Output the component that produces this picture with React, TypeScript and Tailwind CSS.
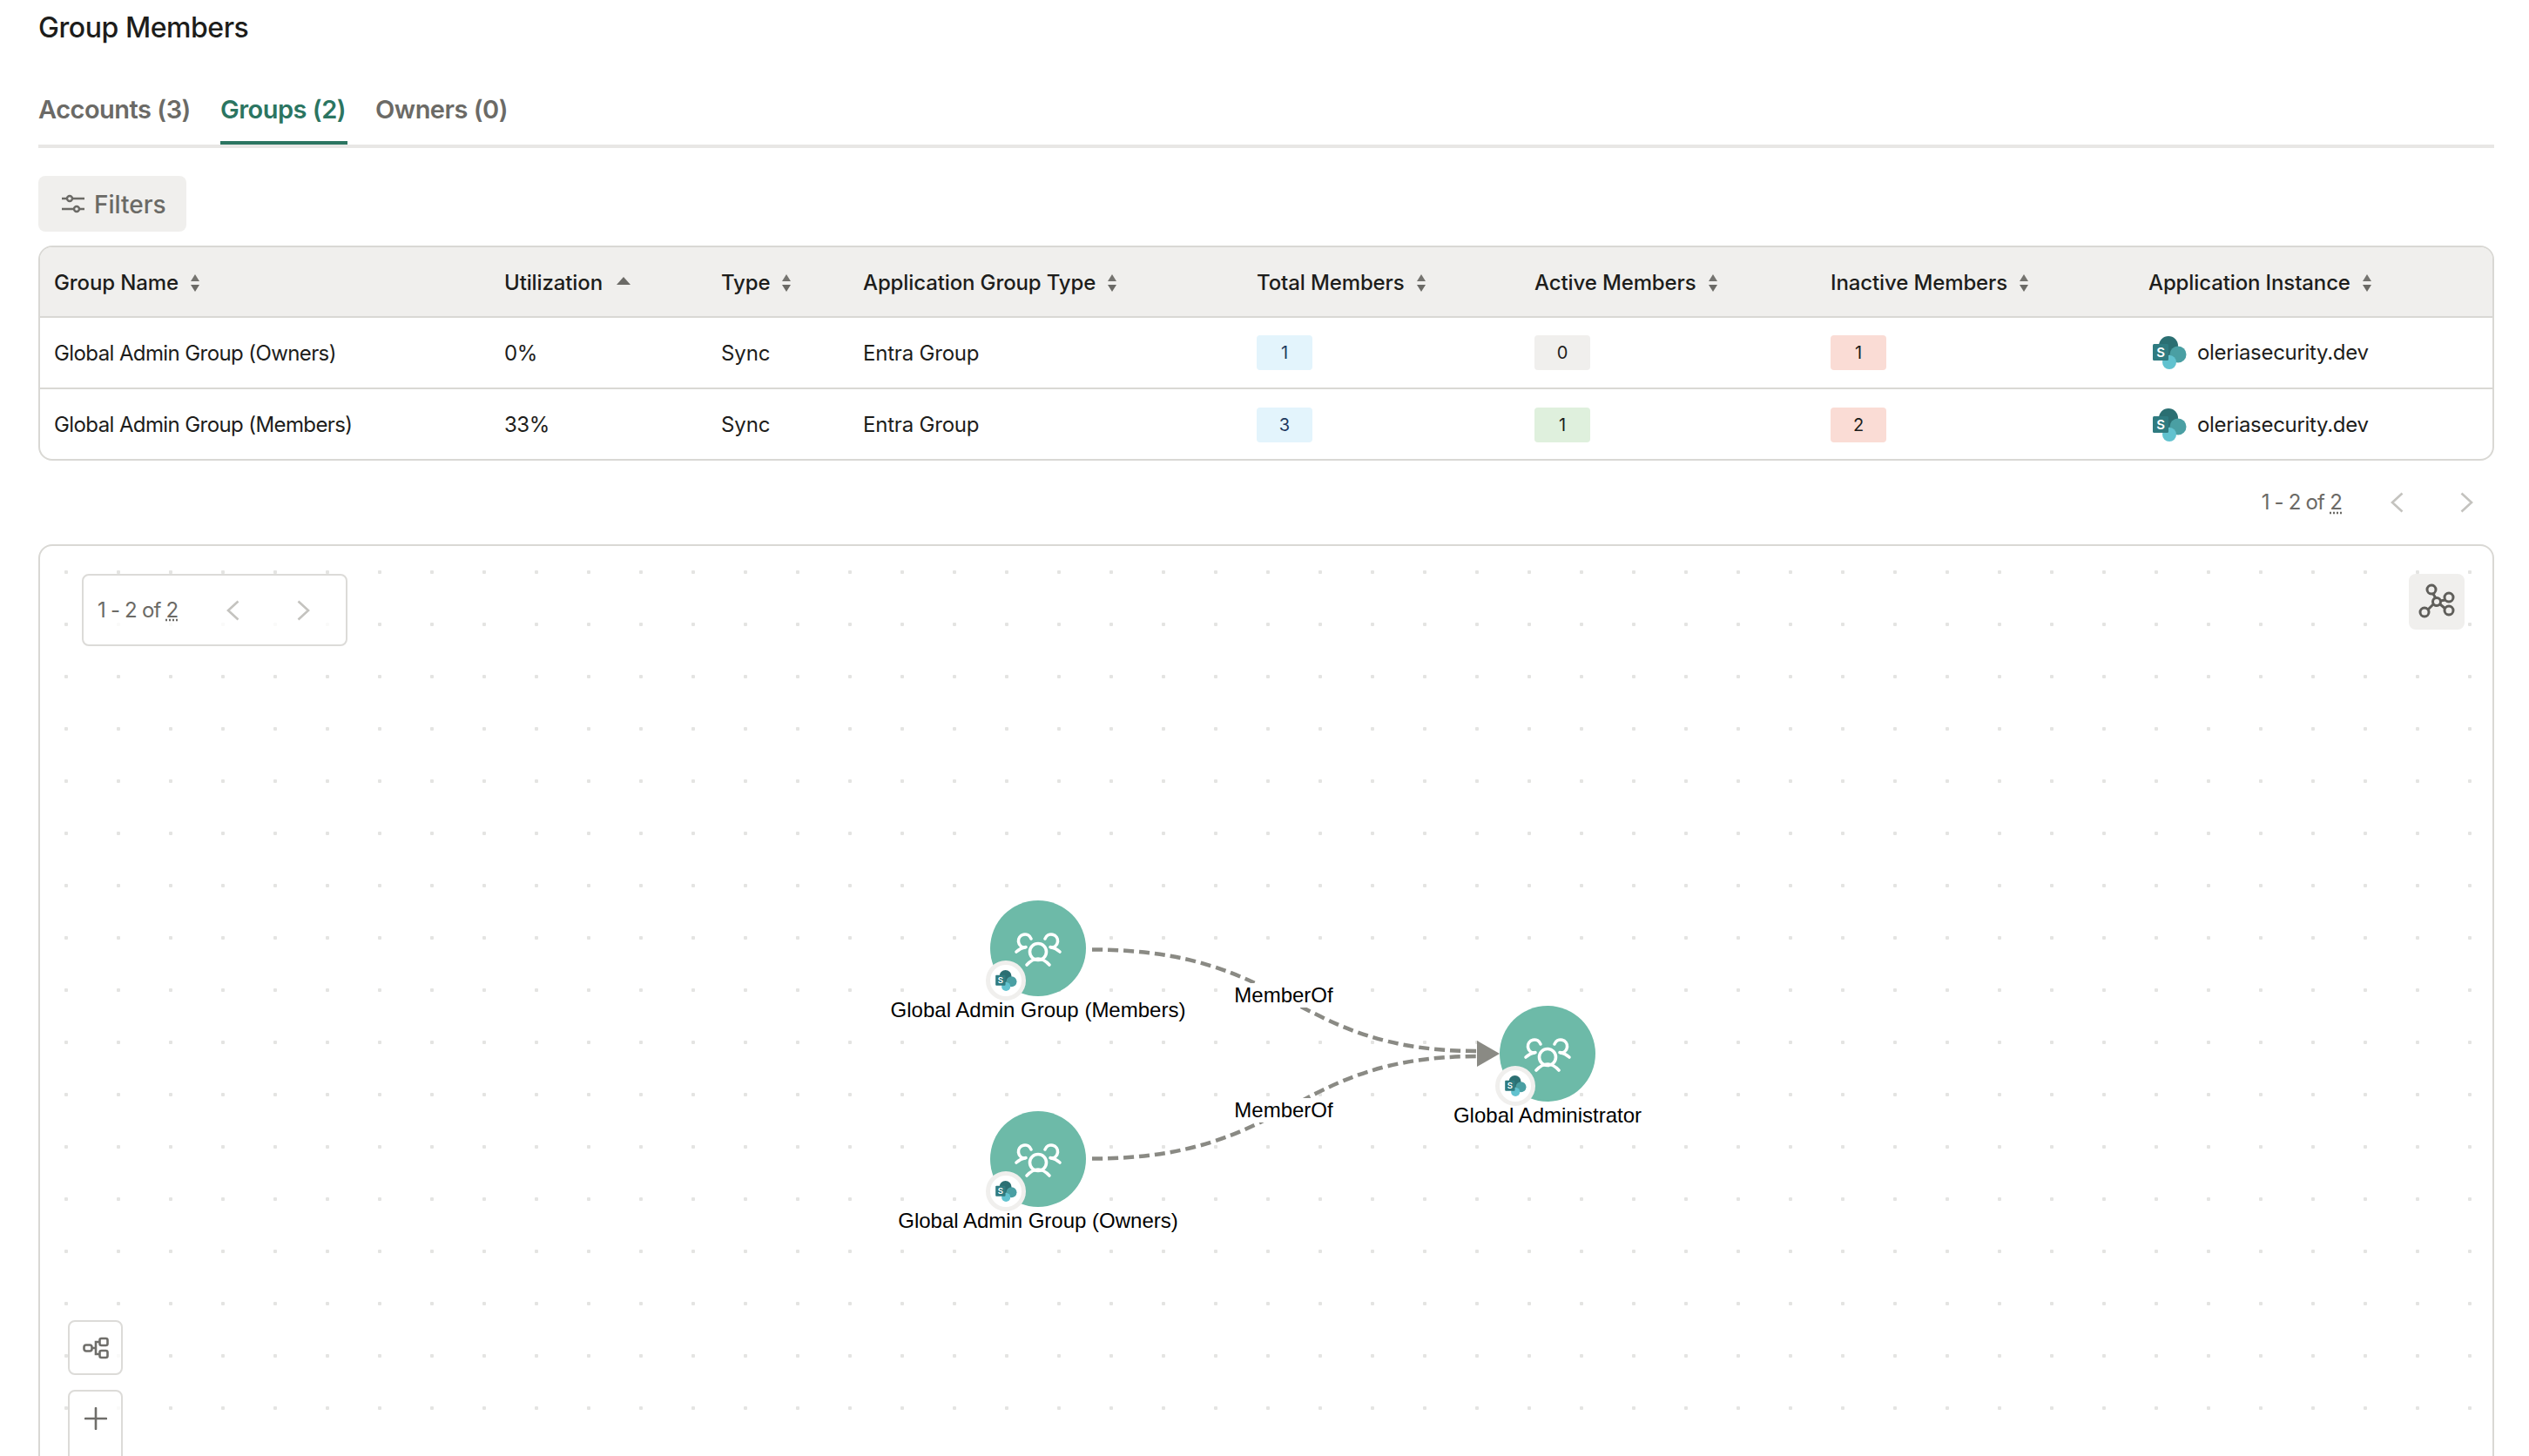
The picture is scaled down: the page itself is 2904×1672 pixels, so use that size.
import React from 'react';

const SANS = 'font-[Inter,sans-serif]';

const columns = [
  { label: 'Group Name', width: 'w-[517px]' },
  { label: 'Utilization', width: 'w-[249px]', sorted: true },
  { label: 'Type', width: 'w-[163px]' },
  { label: 'Application Group Type', width: 'w-[452px]' },
  { label: 'Total Members', width: 'w-[319px]' },
  { label: 'Active Members', width: 'w-[340px]' },
  { label: 'Inactive Members', width: 'w-[365px]' },
  { label: 'Application Instance', width: 'w-[411px]' },
];

const rows = [
  { name: 'Global Admin Group (Owners)', util: '0%', total: '1', active: '0', activeBg: 'bg-[#f0efed]', inactive: '1' },
  { name: 'Global Admin Group (Members)', util: '33%', total: '3', active: '1', activeBg: 'bg-[#dff0dd]', inactive: '2' },
];

function SortIcon({ sorted }: { sorted?: boolean }) {
  if (sorted) {
    return (
      <svg width="18" height="12" viewBox="0 0 18 12" className="ml-[15px] mt-[-4px]">
        <path d="M9 1 L17 10 L1 10 Z" fill="#6b6a66" />
      </svg>
    );
  }
  return (
    <svg width="12" height="22" viewBox="0 0 12 22" className="ml-[13px]">
      <path d="M6 1 L11 9 L1 9 Z" fill="#757470" />
      <path d="M6 21 L11 13 L1 13 Z" fill="#6b6a66" />
    </svg>
  );
}

function SharePoint({ className }: { className: string }) {
  return (
    <svg viewBox="0 0 39 38" className={className}>
      <circle cx="18" cy="11" r="11" fill="#2b6f72" />
      <circle cx="29" cy="21" r="9.5" fill="#4a9fa3" />
      <circle cx="19" cy="30" r="8" fill="#61c2cf" />
      <rect x="0" y="9" width="18" height="19" rx="1.5" fill="#2f7b80" />
      <text x="9" y="24" textAnchor="middle" fontSize="15" fontWeight="600" fill="#ffffff" fontFamily="Inter, sans-serif">
        S
      </text>
    </svg>
  );
}

function Chevron({ left, className }: { left?: boolean; className?: string }) {
  return (
    <svg width="15" height="24" viewBox="0 0 15 24" className={className}>
      <path d={left ? 'M13.5 1.5 L2 12 L13.5 22.5' : 'M1.5 1.5 L13 12 L1.5 22.5'} fill="none" stroke="#c4c3bf" strokeWidth="2.6" />
    </svg>
  );
}

function PageCount() {
  return (
    <span className="text-[24px] leading-none tracking-[-0.8px] text-[#6b6a66] whitespace-nowrap">
      1 - 2 of <span className="underline decoration-dotted underline-offset-[3px]">2</span>
    </span>
  );
}

function GroupNode({ label, className }: { label: string; className: string }) {
  return (
    <div className={`absolute w-[110px] h-[110px] rounded-full bg-[#6dbaa8] ${className}`}>
      <svg viewBox="-55 -55 110 110" className="w-[110px] h-[110px]" fill="none" stroke="#ffffff" strokeWidth="3.6" strokeLinecap="round">
        <circle cx="0" cy="4" r="9.5" />
        <path d="M-13 19 Q0 5 13 19" />
        <path d="M-8 -11 A7.5 7.5 0 1 0 -15 -1" />
        <path d="M-25 4 Q-20 -0.5 -14 -1.5" />
        <path d="M8 -11 A7.5 7.5 0 1 1 15 -1" />
        <path d="M25 4 Q20 -0.5 14 -1.5" />
      </svg>
      <div className="absolute left-[-5px] top-[69px] w-[46px] h-[46px] rounded-full bg-white border-[5px] border-[#f0efed] flex items-center justify-center">
        <SharePoint className="w-[25px] h-[24px]" />
      </div>
      <div className="absolute left-1/2 top-[112px] -translate-x-1/2 whitespace-nowrap font-['Liberation_Sans',sans-serif] text-[24px] leading-[28px] text-black">
        {label}
      </div>
    </div>
  );
}

function EdgeLabel({ className }: { className: string }) {
  return (
    <div className={`absolute -translate-x-1/2 -translate-y-1/2 bg-white font-['Liberation_Sans',sans-serif] text-[24px] leading-[28px] text-black ${className}`}>
      MemberOf
    </div>
  );
}

export default function App() {
  return (
    <div className={`w-[2904px] h-[1672px] overflow-hidden bg-white pl-[44px] pr-[40px] pt-3 flex flex-col ${SANS}`}>
      <div className="h-10 text-[32px] leading-10 font-medium tracking-[-0.45px] text-[#1d1d1b]">Group Members</div>

      {/* tabs */}
      <div className="mt-[34px] flex border-b-4 border-[#e8e7e5] text-[29px] font-semibold tracking-[-0.5px] whitespace-nowrap">
        <div className="w-[175px] mr-[34px] h-20 flex items-center text-[#6b6a66]">Accounts (3)</div>
        <div className="w-[146px] mr-[32px] h-20 flex items-center text-[#2b7561] relative">
          Groups (2)
          <div className="absolute left-0 right-0 bottom-0 h-1 bg-[#2b7561]"></div>
        </div>
        <div className="h-20 flex items-center text-[#6b6a66]">Owners (0)</div>
      </div>

      <div className="mt-8 w-[170px] h-16 rounded-lg bg-[#f0efed] flex items-center pl-[27px] gap-[11px] text-[28px] font-medium text-[#6b6a66] shrink-0">
        <svg width="26" height="22" viewBox="0 0 26 22" fill="none" stroke="#6b6a66" strokeWidth="2.4">
          <path d="M0 5 H6 M12 5 H26 M0 17 H14 M20 17 H26" />
          <circle cx="9" cy="5" r="3" />
          <circle cx="17" cy="17" r="3" />
        </svg>
        <span className="pt-[2px]">Filters</span>
      </div>

      {/* table */}
      <div className="mt-4 h-[247px] shrink-0 rounded-2xl border-2 border-[#d9d8d4] overflow-hidden">
        <table className="w-full table-fixed border-collapse">
          <colgroup>
            {columns.map((c) => (
              <col key={c.label} className={c.width} />
            ))}
          </colgroup>
          <thead>
            <tr className="h-[80px] bg-[#f0efed] border-b-2 border-[#d9d8d4]">
              {columns.map((c) => (
                <th key={c.label} className="pl-4 pt-[2px] text-left text-[24px] font-medium tracking-[-0.12px] text-[#1d1d1b]">
                  <div className="flex items-center whitespace-nowrap">
                    {c.label}
                    <SortIcon sorted={c.sorted} />
                  </div>
                </th>
              ))}
            </tr>
          </thead>
          <tbody className="text-[24px] text-[#1d1d1b]">
            {rows.map((r, i) => (
              <tr key={r.name} className={`h-[82px] ${i === 0 ? 'border-b-2 border-[#d9d8d4]' : ''}`}>
                <td className="pl-4 pt-[1px] whitespace-nowrap tracking-[-0.6px]">{r.name}</td>
                <td className="pl-4 pt-[1px] tracking-[-0.5px]">{r.util}</td>
                <td className="pl-4 pt-[1px] tracking-[-0.1px]">Sync</td>
                <td className="pl-4 pt-[1px] tracking-[-0.2px]">Entra Group</td>
                <td className="pl-4">
                  <div className="w-[64px] h-10 rounded bg-[#e3f4fc] flex items-center justify-center text-[20px] text-[#1f3a5f]">{r.total}</div>
                </td>
                <td className="pl-4">
                  <div className={`w-[64px] h-10 rounded flex items-center justify-center text-[20px] ${r.activeBg}`}>{r.active}</div>
                </td>
                <td className="pl-4">
                  <div className="w-[64px] h-10 rounded bg-[#fadcd5] flex items-center justify-center text-[20px]">{r.inactive}</div>
                </td>
                <td className="pl-4">
                  <div className="flex items-center gap-3 ml-[5px] tracking-[-0.3px]">
                    <SharePoint className="w-[39px] h-[38px] shrink-0" />
                    oleriasecurity.dev
                  </div>
                </td>
              </tr>
            ))}
          </tbody>
        </table>
      </div>

      {/* pager */}
      <div className="h-[96px] shrink-0 flex items-center justify-end pr-[24px]">
        <PageCount />
        <Chevron left className="ml-[56px]" />
        <Chevron className="ml-[65px]" />
      </div>

      {/* graph canvas */}
      <div className="relative h-[1100px] shrink-0 rounded-2xl border-2 border-[#d9d8d4] bg-[radial-gradient(circle,#e4e4e2_2px,transparent_2.5px)] bg-[size:60px_60px]">
        <div className="absolute left-[48px] top-[32px] w-[305px] h-[83px] rounded-lg border-2 border-[#dcdbd8] bg-white/80 flex items-center pl-[16px]">
          <PageCount />
          <Chevron left className="ml-[56px]" />
          <Chevron className="ml-[66px]" />
        </div>

        <div className="absolute left-[2720px] top-[32px] w-16 h-16 rounded-lg bg-[#f0efed] flex items-center justify-center">
          <svg width="64" height="64" viewBox="0 0 64 64" fill="none" stroke="#5f5e5a" strokeWidth="3">
            <path d="M28 23 L31 28 M42 30 L36 31 M42 40 L36 35 M22 41 L28 35" />
            <circle cx="26" cy="18" r="5" />
            <circle cx="46" cy="27" r="5" />
            <circle cx="46" cy="42" r="5" />
            <circle cx="18" cy="44" r="5" />
            <circle cx="32" cy="32" r="4.5" />
          </svg>
        </div>

        <svg viewBox="46 627 2816 1100" className="absolute left-0 top-0 w-[2816px] h-[1100px]" fill="none">
          <path d="M1254 1090.5 C1482 1090.5 1482 1207 1696 1207" stroke="#8a8a84" strokeWidth="4.5" strokeDasharray="12 6" />
          <path d="M1254 1330.5 C1482 1330.5 1482 1213 1696 1213" stroke="#8a8a84" strokeWidth="4.5" strokeDasharray="12 6" />
          <path d="M1696 1195 L1722 1210 L1696 1225 Z" fill="#8a8a84" />
        </svg>

        <EdgeLabel className="left-[1428px] top-[516px]" />
        <EdgeLabel className="left-[1428px] top-[648px]" />

        <GroupNode label="Global Admin Group (Members)" className="left-[1091px] top-[407px]" />
        <GroupNode label="Global Admin Group (Owners)" className="left-[1091px] top-[649px]" />
        <GroupNode label="Global Administrator" className="left-[1676px] top-[528px]" />

        <div className="absolute left-[32px] top-[889px] w-[63px] h-[63px] rounded-lg border-2 border-[#dcdbd8] bg-white/80 flex items-center justify-center">
          <svg width="30" height="26" viewBox="0 0 30 26" fill="none" stroke="#6f6e6a" strokeWidth="2.6">
            <rect x="1.5" y="9.5" width="9" height="7" rx="2.5" />
            <rect x="19.5" y="2" width="9" height="8" rx="2" />
            <rect x="19.5" y="16" width="9" height="8" rx="2" />
            <path d="M11 13 H15 M19 6 H15 V20 H19" />
          </svg>
        </div>
        <div className="absolute left-[32px] top-[969px] w-[63px] h-[100px] rounded-lg border-2 border-[#dcdbd8] bg-white/80 flex justify-center pt-[18px]">
          <svg width="26" height="26" viewBox="0 0 26 26" fill="none" stroke="#6f6e6a" strokeWidth="2.6" strokeLinecap="round">
            <path d="M13 1 V25 M1 13 H25" />
          </svg>
        </div>
      </div>
    </div>
  );
}
